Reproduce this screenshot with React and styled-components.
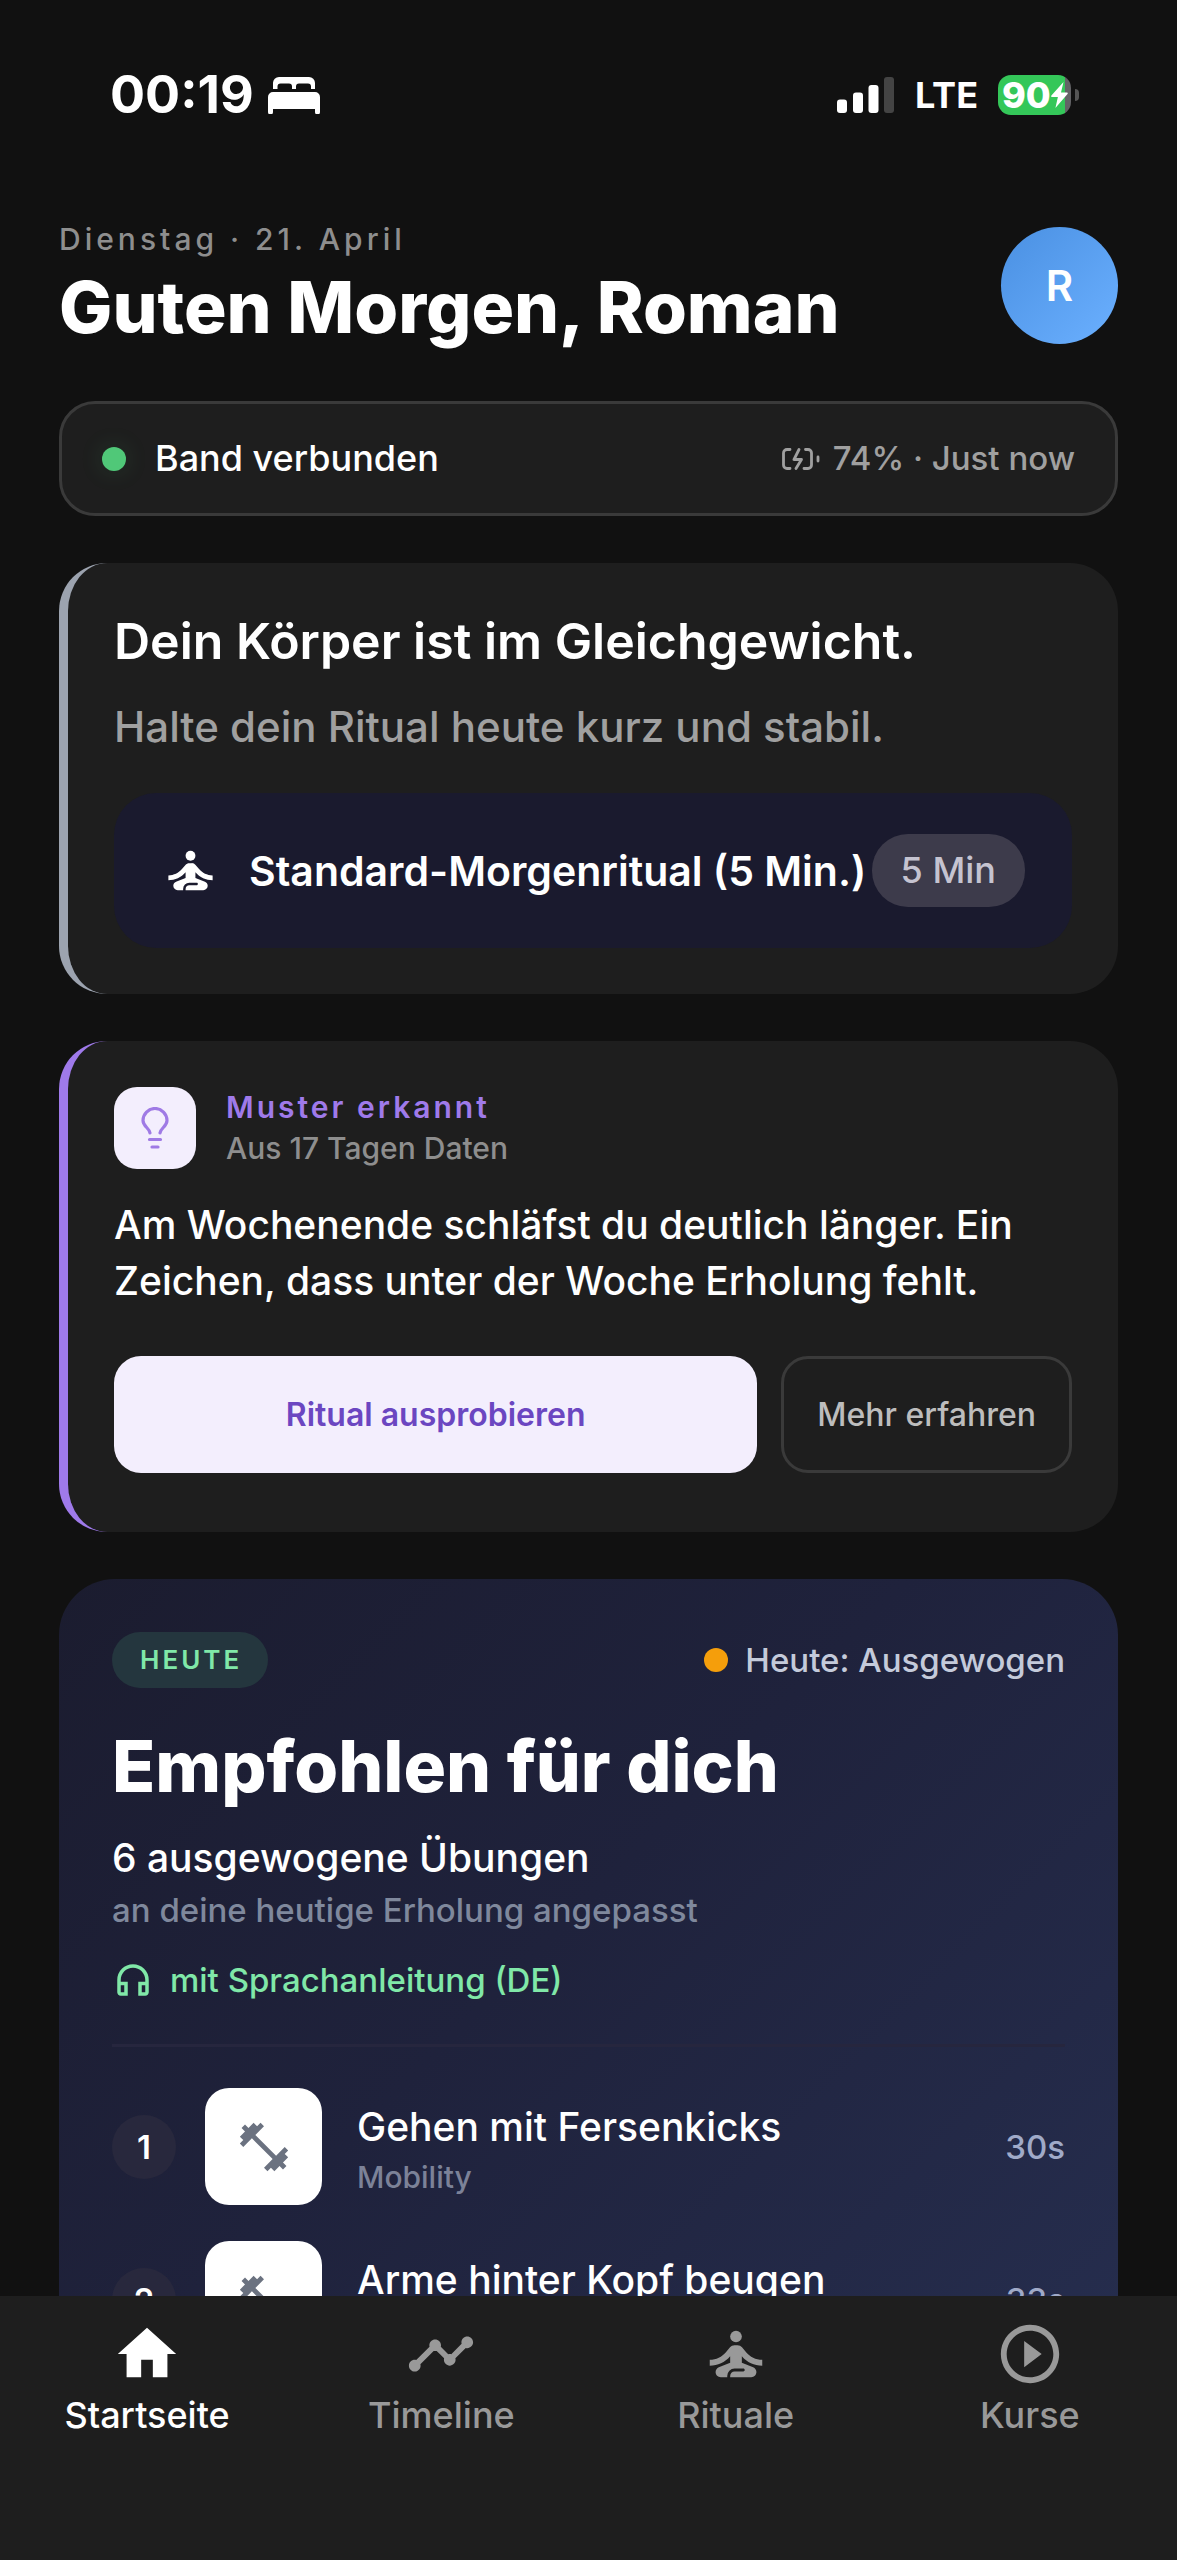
import * as React from "react";
import styled, { createGlobalStyle } from "styled-components";
import {
  MdFitnessCenter,
  MdHome,
  MdOutlineHeadphones,
  MdPlayCircleOutline,
  MdSelfImprovement,
  MdTimeline,
} from "react-icons/md";

const exercises = [
  { name: "Gehen mit Fersenkicks", type: "Mobility", time: "30s" },
  { name: "Arme hinter Kopf beugen", type: "Mobility", time: "33s" },
];

const tabs = [
  { label: "Startseite", Icon: MdHome, active: true },
  { label: "Timeline", Icon: MdTimeline },
  { label: "Rituale", Icon: MdSelfImprovement },
  { label: "Kurse", Icon: MdPlayCircleOutline },
];

const BedIcon = () => (
  <svg width="52" height="37" viewBox="0 0 52 37" fill="#fff">
    <path d="M5 12V6a6 6 0 0 1 6-6h30a6 6 0 0 1 6 6v6h-4V9.500a3 3 0 0 0-3-3h-9a3 3 0 0 0-3 3V12h-4V9.500a3 3 0 0 0-3-3h-8.500a3 3 0 0 0-3 3V12z" />
    <path d="M0 20a5 5 0 0 1 5-5h42a5 5 0 0 1 5 5v15a2 2 0 0 1-5 0v-3H5v3a2 2 0 0 1-5 0z" />
  </svg>
);

const SignalIcon = () => (
  <svg width="58" height="36" viewBox="0 0 58 36" fill="#fff">
    <rect x="0" y="22.500" width="10" height="13.500" rx="3" />
    <rect x="16" y="15.500" width="10" height="20.500" rx="3" />
    <rect x="31.500" y="8" width="10" height="28" rx="3" />
    <rect x="47" y="0" width="10" height="36" rx="3" fill="#444" />
  </svg>
);

const BoltIcon = () => (
  <svg width="17" height="26" viewBox="0 0 17 26" fill="#fff">
    <path d="M12.500 0 .4 13.600c-.6.700-.3 1.400.5 1.400h6L4.400 26 16.500 12c.6-.7.300-1.400-.5-1.400h-6z" />
  </svg>
);

const BandBatteryIcon = () => (
  <svg
    width="38"
    height="22"
    viewBox="0 0 38 22"
    fill="none"
    stroke="#a0a0a0"
    strokeWidth="2.800"
    strokeLinecap="round"
    strokeLinejoin="round"
  >
    <path d="M8 1.500H5A3.500 3.500 0 0 0 1.500 5v12A3.500 3.500 0 0 0 5 20.500h3" />
    <path d="M23.500 1.500H26A3.500 3.500 0 0 1 29.500 5v12a3.500 3.500 0 0 1-3.500 3.500h-4" />
    <path d="M17 1.500 12 11.500h7.500L14 20.500" />
    <path d="M36 9v4" />
  </svg>
);

const BulbIcon = () => (
  <svg
    width="28"
    height="42"
    viewBox="0 0 28 42"
    fill="none"
    stroke="#9f7ae5"
    strokeWidth="3.200"
    strokeLinecap="round"
  >
    <path d="M9 26C8.500 21 2 19.500 2 13.500a12 12 0 0 1 24 0c0 6-6.500 7.500-7 12.500" />
    <path d="M8.500 32.500h11M11 40h6" />
  </svg>
);

const App = () => {
  return (
    <>
      <GlobalStyle />
      <Screen>
        <Content>
          <StatusBar>
            <StatusGroup>
              <Clock>00:19</Clock>
              <BedIcon />
            </StatusGroup>
            <StatusGroup>
              <SignalIcon />
              <Network>LTE</Network>
              <Battery>
                <BatteryBody>
                  90
                  <BoltIcon />
                </BatteryBody>
                <BatteryCap />
              </Battery>
            </StatusGroup>
          </StatusBar>

          <Header>
            <Greeting>
              <DateText>Dienstag · 21. April</DateText>
              <Title>Guten Morgen, Roman</Title>
            </Greeting>
            <Avatar type="button">R</Avatar>
          </Header>

          <Stack>
            <BandBar>
              <BandName>
                <Dot $color="#50c878" $glow />
                Band verbunden
              </BandName>
              <BandInfo>
                <BandBatteryIcon />
                74% · Just now
              </BandInfo>
            </BandBar>

            <AccentCard $accent="#9ca3af">
              <BalanceTitle>Dein Körper ist im Gleichgewicht.</BalanceTitle>
              <BalanceText>Halte dein Ritual heute kurz und stabil.</BalanceText>
              <RitualButton type="button">
                <MdSelfImprovement size={59} />
                <RitualName>Standard-Morgenritual (5 Min.)</RitualName>
                <Duration>5 Min</Duration>
              </RitualButton>
            </AccentCard>

            <AccentCard $accent="#9f7aea" $bottom="59px">
              <PatternHead>
                <PatternIcon>
                  <BulbIcon />
                </PatternIcon>
                <div>
                  <PatternLabel>Muster erkannt</PatternLabel>
                  <PatternSource>Aus 17 Tagen Daten</PatternSource>
                </div>
              </PatternHead>
              <PatternText>
                Am Wochenende schläfst du deutlich länger. Ein Zeichen, dass
                unter der Woche Erholung fehlt.
              </PatternText>
              <Actions>
                <PrimaryButton type="button">Ritual ausprobieren</PrimaryButton>
                <SecondaryButton type="button">Mehr erfahren</SecondaryButton>
              </Actions>
            </AccentCard>

            <TodayCard>
              <TodayTop>
                <TodayBadge>HEUTE</TodayBadge>
                <TodayStatus>
                  <Dot $color="#f59e0b" />
                  Heute: Ausgewogen
                </TodayStatus>
              </TodayTop>
              <TodayTitle as="h2">Empfohlen für dich</TodayTitle>
              <TodayCount>6 ausgewogene Übungen</TodayCount>
              <TodayNote>an deine heutige Erholung angepasst</TodayNote>
              <VoiceNote>
                <MdOutlineHeadphones size={42} />
                mit Sprachanleitung (DE)
              </VoiceNote>
              <ExerciseList>
                {exercises.map((exercise, index) => (
                  <Exercise key={exercise.name}>
                    <Position>{index + 1}</Position>
                    <Thumb>
                      <MdFitnessCenter size={58} />
                    </Thumb>
                    <ExerciseText>
                      <ExerciseName>{exercise.name}</ExerciseName>
                      <ExerciseType>{exercise.type}</ExerciseType>
                    </ExerciseText>
                    <ExerciseTime>{exercise.time}</ExerciseTime>
                  </Exercise>
                ))}
              </ExerciseList>
            </TodayCard>
          </Stack>
        </Content>

        <TabBar>
          {tabs.map(({ label, Icon, active }) => (
            <Tab key={label} href="#" $active={active}>
              <Icon size={70} />
              {label}
            </Tab>
          ))}
        </TabBar>
      </Screen>
    </>
  );
};

export default App;

const GlobalStyle = createGlobalStyle`
  * {
    box-sizing: border-box;
  }

  body {
    margin: 0;
    background: #111;
    color: #fff;
    font-family: Inter, "Liberation Sans", sans-serif;
    font-weight: 500;
  }

  button {
    border: none;
    font: inherit;
    color: inherit;
    cursor: pointer;
  }

  h1, h2, p, ol {
    margin: 0;
    padding: 0;
  }

  svg {
    display: block;
    flex-shrink: 0;
  }
`;

const Screen = styled.div`
  height: 100vh;
  display: flex;
  flex-direction: column;
`;

const Content = styled.main`
  flex: 1;
  min-height: 0;
  padding: 0 59px;
  overflow-y: auto;
  scrollbar-width: none;
`;

const StatusBar = styled.div`
  display: flex;
  align-items: center;
  justify-content: space-between;
  padding: 65px 39px 0 51px;
`;

const StatusGroup = styled.div`
  display: flex;
  align-items: center;
`;

const Clock = styled.span`
  margin-right: 14px;
  font-size: 52px;
  line-height: 60px;
  font-weight: 700;
`;

const Network = styled.span`
  margin: 0 20px;
  font-size: 36px;
  line-height: 60px;
  font-weight: 700;
`;

const Battery = styled.div`
  display: flex;
  align-items: center;
  gap: 4px;
`;

const BatteryBody = styled.div`
  display: flex;
  align-items: center;
  width: 73px;
  height: 40px;
  padding-left: 4px;
  border-radius: 13px;
  background: linear-gradient(90deg, #34c759 92%, #636366 92%);
  font-size: 36px;
  line-height: 40px;
  font-weight: 800;
`;

const BatteryCap = styled.span`
  width: 4px;
  height: 12px;
  border-radius: 0 4px 4px 0;
  background: #555;
`;

const Header = styled.header`
  display: flex;
  align-items: center;
  justify-content: space-between;
  margin: 98px 0 54px;
`;

const Greeting = styled.div`
  display: flex;
  flex-direction: column;
  gap: 12px;
`;

const DateText = styled.p`
  color: #8e8e8e;
  font-size: 30px;
  line-height: 32px;
  letter-spacing: 4px;
`;

const Title = styled.h1`
  font-size: 71px;
  line-height: 80px;
  font-weight: 800;
`;

const Avatar = styled.button`
  width: 117px;
  height: 117px;
  padding: 0;
  border-radius: 50%;
  background: linear-gradient(135deg, #4a90e2, #6bb0ff);
  font-size: 42px;
  font-weight: 600;
`;

const Stack = styled.div`
  display: flex;
  flex-direction: column;
  gap: 47px;
  padding-bottom: 47px;
`;

const BandBar = styled.section`
  display: flex;
  align-items: center;
  justify-content: space-between;
  padding: 32px 40px;
  border: 3px solid #3a3a3a;
  border-radius: 36px;
  background: #1e1e1e;
  line-height: 45px;
`;

const BandName = styled.div`
  display: flex;
  align-items: center;
  gap: 29px;
  font-size: 36px;
`;

const BandInfo = styled.div`
  display: flex;
  align-items: center;
  gap: 13px;
  color: #a0a0a0;
  font-size: 33px;
`;

const Dot = styled.span`
  width: 24px;
  height: 24px;
  border-radius: 50%;
  background: ${({ $color }) => $color};
  box-shadow: ${({ $glow }) => ($glow ? "0 0 24px rgba(80, 200, 120, 0.16)" : "none")};
`;

const AccentCard = styled.section`
  padding: 46px;
  padding-bottom: ${({ $bottom }) => $bottom || "46px"};
  border-left: 9px solid ${({ $accent }) => $accent};
  border-radius: 48px;
  background: #1e1e1e;
`;

const BalanceTitle = styled.h2`
  font-size: 50px;
  line-height: 64px;
  font-weight: 600;
`;

const BalanceText = styled.p`
  margin: 28px 0 40px;
  color: #a0a0a0;
  font-size: 42px;
  line-height: 52px;
`;

const RitualButton = styled.button`
  display: flex;
  align-items: center;
  width: 100%;
  min-height: 155px;
  padding: 0 47px;
  border-radius: 42px;
  background: #1a1a2e;
`;

const RitualName = styled.span`
  flex: 1;
  margin-left: 29px;
  font-size: 41px;
  font-weight: 600;
  text-align: left;
  white-space: nowrap;
`;

const Duration = styled.span`
  padding: 0 29px;
  border-radius: 36px;
  background: #3d3b4b;
  color: #c5c3d0;
  font-size: 36px;
  line-height: 73px;
  white-space: nowrap;
`;

const PatternHead = styled.div`
  display: flex;
  align-items: center;
  gap: 30px;
  line-height: 41px;
  font-size: 30px;
`;

const PatternIcon = styled.div`
  display: flex;
  align-items: center;
  justify-content: center;
  width: 82px;
  height: 82px;
  border-radius: 23px;
  background: #f3eefd;
`;

const PatternLabel = styled.h2`
  color: #9f7aea;
  font-size: 30px;
  font-weight: 600;
  letter-spacing: 3px;
`;

const PatternSource = styled.p`
  color: #8e8e8e;
`;

const PatternText = styled.p`
  margin: 28px 0 47px;
  font-size: 39px;
  line-height: 56px;
`;

const Actions = styled.div`
  display: flex;
  gap: 24px;
`;

const ActionButton = styled.button`
  height: 117px;
  border-radius: 27px;
  font-size: 32px;
`;

const PrimaryButton = styled(ActionButton)`
  flex: 1;
  background: #f3eefd;
  color: #6b46c1;
  font-weight: 600;
`;

const SecondaryButton = styled(ActionButton)`
  padding: 0 33px;
  border: 3px solid #3a3a3a;
  background: transparent;
  color: #bdbdbd;
`;

const TodayCard = styled.section`
  padding: 53px;
  border-radius: 56px;
  background: linear-gradient(135deg, #1b1c2f 0%, #1f223c 45%, #262e4f 100%);
`;

const TodayTop = styled.div`
  display: flex;
  align-items: center;
  justify-content: space-between;
`;

const TodayBadge = styled.span`
  padding: 0 26px 0 28px;
  border-radius: 28px;
  background: #24363e;
  color: #80e8a8;
  font-size: 26px;
  line-height: 56px;
  font-weight: 600;
  letter-spacing: 3px;
`;

const TodayStatus = styled.div`
  display: flex;
  align-items: center;
  gap: 17px;
  color: #c4cada;
  font-size: 33px;
`;

const TodayTitle = styled(Title)`
  margin: 38px 0 28px;
`;

const TodayCount = styled.p`
  font-size: 39px;
  line-height: 48px;
`;

const TodayNote = styled.p`
  margin: 6px 0 26px;
  color: #7f889c;
  font-size: 33px;
  line-height: 44px;
`;

const VoiceNote = styled.p`
  display: flex;
  align-items: center;
  gap: 16px;
  color: #80e8a8;
  font-size: 33px;
  line-height: 44px;
`;

const ExerciseList = styled.ol`
  display: flex;
  flex-direction: column;
  gap: 36px;
  margin-top: 42px;
  padding-top: 41px;
  border-top: 3px solid #26263e;
  list-style: none;
`;

const Exercise = styled.li`
  display: flex;
  align-items: center;
`;

const Position = styled.span`
  width: 64px;
  border-radius: 50%;
  background: #28283d;
  font-size: 33px;
  line-height: 64px;
  font-weight: 600;
  text-align: center;
`;

const Thumb = styled.div`
  display: flex;
  align-items: center;
  justify-content: center;
  width: 117px;
  height: 117px;
  margin: 0 35px 0 29px;
  border-radius: 24px;
  background: #fff;
  color: #6b7280;
`;

const ExerciseText = styled.div`
  display: flex;
  flex: 1;
  flex-direction: column;
  gap: 3px;
  padding-top: 6px;
`;

const ExerciseName = styled.span`
  font-size: 39px;
  line-height: 52px;
`;

const ExerciseType = styled.span`
  color: #7c8298;
  font-size: 30px;
  line-height: 42px;
`;

const ExerciseTime = styled.span`
  color: #a0aac8;
  font-size: 33px;
`;

const TabBar = styled.nav`
  display: grid;
  grid-template-columns: repeat(4, 1fr);
  padding: 23px 0 123px;
  background: #1e1e1e;
`;

const Tab = styled.a`
  display: flex;
  flex-direction: column;
  align-items: center;
  gap: 4px;
  color: ${({ $active }) => ($active ? "#fff" : "#999")};
  font-size: 36px;
  line-height: 44px;
  text-decoration: none;
`;
